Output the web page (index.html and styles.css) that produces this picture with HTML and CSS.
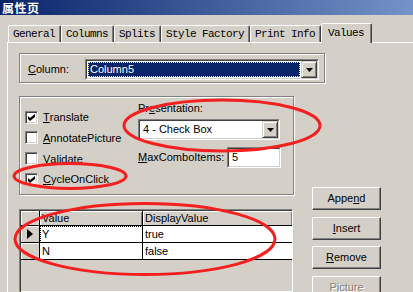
FILE: index.html
```html
<!DOCTYPE html>
<html lang="zh">
<head>
    <meta charset="UTF-8">
    <title>属性页</title>
    <link rel="stylesheet" href="styles.css">
</head>
<body>
    <div class="titlebar">属性页</div>

    <div class="tabstrip">
        <div class="tab">General</div>
        <div class="tab">Columns</div>
        <div class="tab">Splits</div>
        <div class="tab">Style Factory</div>
        <div class="tab">Print Info</div>
        <div class="tab active">Values</div>
    </div>

    <div class="panel">
        <div class="group group-column">
            <div class="lbl lbl-column"><u>C</u>olumn:</div>
            <div class="combo combo-column">
                <div class="field">
                    <div class="selected">Column5</div>
                    <div class="drop"><svg width="7" height="4"><path d="M0 0h7L3.5 4z"/></svg></div>
                </div>
            </div>
        </div>

        <div class="content-row">
            <div class="left-col">
                <div class="group group-options">
                    <div class="checks">
                        <div class="check"><span class="box"><svg width="7" height="7"><path d="M0 2l2 2 5-4v3l-5 4-2-2z"/></svg></span><u>T</u>ranslate</div>
                        <div class="check"><span class="box"></span><u>A</u>nnotatePicture</div>
                        <div class="check"><span class="box"></span><u>V</u>alidate</div>
                        <div class="check"><span class="box"><svg width="7" height="7"><path d="M0 2l2 2 5-4v3l-5 4-2-2z"/></svg></span><u>C</u>ycleOnClick</div>
                    </div>
                    <div class="pres">
                        <div class="lbl">Pr<u>e</u>sentation:</div>
                        <div class="combo combo-pres">
                            <div class="field">
                                <div class="value">4 - Check Box</div>
                                <div class="drop"><svg width="7" height="4"><path d="M0 0h7L3.5 4z"/></svg></div>
                            </div>
                        </div>
                        <div class="max-row">
                            <div class="lbl"><u>M</u>axComboItems:</div>
                            <div class="combo combo-max">
                                <div class="field"><div class="value">5</div></div>
                            </div>
                        </div>
                    </div>
                </div>

                <div class="grid">
                    <div class="grid-body">
                        <div class="grid-row head">
                            <div class="cell sel"></div>
                            <div class="cell">Value</div>
                            <div class="cell last">DisplayValue</div>
                        </div>
                        <div class="grid-row">
                            <div class="cell sel"><span class="pointer"></span></div>
                            <div class="cell data focus">Y</div>
                            <div class="cell data last">true</div>
                        </div>
                        <div class="grid-row">
                            <div class="cell sel"></div>
                            <div class="cell data">N</div>
                            <div class="cell data last">false</div>
                        </div>
                    </div>
                </div>
            </div>

            <div class="buttons">
                <div class="btn">Appe<u>n</u>d</div>
                <div class="btn"><u>I</u>nsert</div>
                <div class="btn"><u>R</u>emove</div>
                <div class="btn disabled"><u>P</u>icture</div>
            </div>
        </div>
    </div>

    <!-- red marks drawn over the dialog -->
    <svg class="marks" width="413" height="292">
        <ellipse cx="222" cy="125.5" rx="98" ry="25.5"/>
        <ellipse cx="70" cy="176" rx="56" ry="12.5"/>
        <ellipse cx="145" cy="239" rx="130" ry="35.5"/>
    </svg>
</body>
</html>
```

FILE: styles.css
```css
body {
    margin: 0;
    width: 413px;
    height: 292px;
    overflow: hidden;
    position: relative;
    background-color: #d4d0c8;
    color: #000;
    font-family: "Liberation Sans", Arial, sans-serif;
    font-size: 11px;
}

.titlebar {
    height: 15px;
    padding-left: 2px;
    background: linear-gradient(to right, #0a246a, #7393c9);
    color: #fff;
    font-family: "Noto Sans CJK SC", sans-serif;
    font-weight: bold;
    font-size: 12px;
    line-height: 15px;
    letter-spacing: 0.5px;
}

/* tabs */
.tabstrip {
    position: relative;
    z-index: 1;
    display: flex;
    align-items: flex-end;
    height: 27px;
    padding-left: 8px;
    box-sizing: border-box;
}

.tab {
    height: 17px;
    box-sizing: border-box;
    padding: 2px 5px 0 4px;
    border-top: 1px solid #fff;
    border-left: 1px solid #fff;
    border-right: 1px solid #404040;
    border-radius: 2px 2px 0 0;
    box-shadow: inset -1px 0 #808080;
    font-family: "Liberation Mono", monospace;
    font-size: 11px;
    letter-spacing: -0.6px;
    line-height: 12px;
    white-space: nowrap;
}

.tab.active {
    height: 20px;
    margin: 0 0 -1px 0;
    padding: 3px 7px 0 6px;
    background-color: #d4d0c8;
}

/* page body */
.panel {
    margin-left: 7px;
    height: 239px;
    padding: 10px 0 0 11px;
    border-top: 1px solid #fff;
    border-left: 1px solid #fff;
}

.group {
    box-sizing: border-box;
    border: 1px solid #808080;
    box-shadow: inset 1px 1px #fff, 1px 1px #fff;
}

.group-column {
    display: flex;
    width: 306px;
    height: 30px;
    padding: 5px 0 0 8px;
}

.lbl {
    line-height: 13px;
    white-space: nowrap;
}

.lbl-column {
    width: 57px;
    line-height: 21px;
}

.combo {
    box-sizing: border-box;
    height: 21px;
    border: 1px solid;
    border-color: #808080 #fff #fff #808080;
}

.field {
    display: flex;
    height: 100%;
    box-sizing: border-box;
    border: 1px solid;
    border-color: #404040 #d4d0c8 #d4d0c8 #404040;
    background-color: #fff;
}

.combo-column {
    width: 234px;
}

.selected {
    flex: 1;
    margin: 1px;
    padding-left: 2px;
    background-color: #0a246a;
    color: #fff;
    line-height: 15px;
    outline: 1px dotted #f3e39a;
    outline-offset: -1px;
}

.value {
    flex: 1;
    padding-left: 3px;
    line-height: 17px;
}

.drop {
    display: flex;
    align-items: center;
    justify-content: center;
    width: 16px;
    box-sizing: border-box;
    border: 1px solid;
    border-color: #d4d0c8 #404040 #404040 #d4d0c8;
    box-shadow: inset 1px 1px #fff, inset -1px -1px #808080;
    background-color: #d4d0c8;
}

.content-row {
    display: flex;
    height: 196px;
    margin-top: 13px;
    overflow: hidden;
}

.left-col {
    width: 275px;
}

.group-options {
    display: flex;
    height: 99px;
    padding-left: 5px;
}

.checks {
    width: 113px;
    padding-top: 10px;
}

.check {
    display: flex;
    align-items: center;
    height: 20.67px;
    white-space: nowrap;
}

.box {
    display: flex;
    align-items: center;
    justify-content: center;
    width: 13px;
    height: 13px;
    margin-right: 5px;
    box-sizing: border-box;
    border: 1px solid;
    border-color: #808080 #fff #fff #808080;
    box-shadow: inset 1px 1px #404040, inset -1px -1px #d4d0c8;
    background-color: #fff;
}

.pres {
    width: 143px;
    padding-top: 5px;
}

.combo-pres {
    width: 142px;
    margin-top: 4px;
}

.max-row {
    display: flex;
    align-items: center;
    justify-content: space-between;
    margin-top: 7px;
}

.combo-max {
    width: 54px;
}

/* values grid */
.grid {
    width: 274px;
    height: 83px;
    margin-top: 14px;
    box-sizing: border-box;
    border: 1px solid;
    border-color: #808080 #fff #fff #808080;
}

.grid-body {
    height: 100%;
    border-top: 1px solid #404040;
    border-left: 1px solid #404040;
}

.grid-row {
    display: grid;
    grid-template-columns: 19px 103px 1fr;
    height: 17px;
}

.grid-row.head {
    height: 15px;
}

.cell {
    position: relative;
    box-sizing: border-box;
    padding-left: 2px;
    border-right: 1px solid #000;
    border-bottom: 1px solid #000;
    line-height: 15px;
    white-space: nowrap;
}

.head .cell {
    line-height: 14px;
    box-shadow: inset 1px 1px #fff, inset -1px 0 #808080;
}

.cell.sel {
    box-shadow: inset 1px 1px #fff;
}

.cell.data {
    background-color: #fff;
    line-height: 16px;
}

.cell.last {
    border-right: none;
}

.cell.focus {
    outline: 1px dotted #000;
    outline-offset: -1px;
}

.pointer {
    position: absolute;
    left: 6px;
    top: 3px;
    width: 0;
    height: 0;
    border-left: 6px solid #000;
    border-top: 5px solid transparent;
    border-bottom: 5px solid transparent;
}

/* buttons */
.buttons {
    display: flex;
    flex-direction: column;
    gap: 6.5px;
    margin-left: 18px;
    padding-top: 91px;
}

.btn {
    flex-shrink: 0;
    width: 69px;
    height: 23px;
    box-sizing: border-box;
    border: 1px solid;
    border-color: #fff #404040 #404040 #fff;
    box-shadow: inset -1px -1px #808080;
    text-align: center;
    line-height: 20px;
}

.btn.disabled {
    color: #808080;
    text-shadow: 1px 1px #fff;
}

.marks {
    position: absolute;
    top: 0;
    left: 0;
    pointer-events: none;
}

.marks ellipse {
    fill: none;
    stroke: #f41f1f;
    stroke-width: 3;
}
```
